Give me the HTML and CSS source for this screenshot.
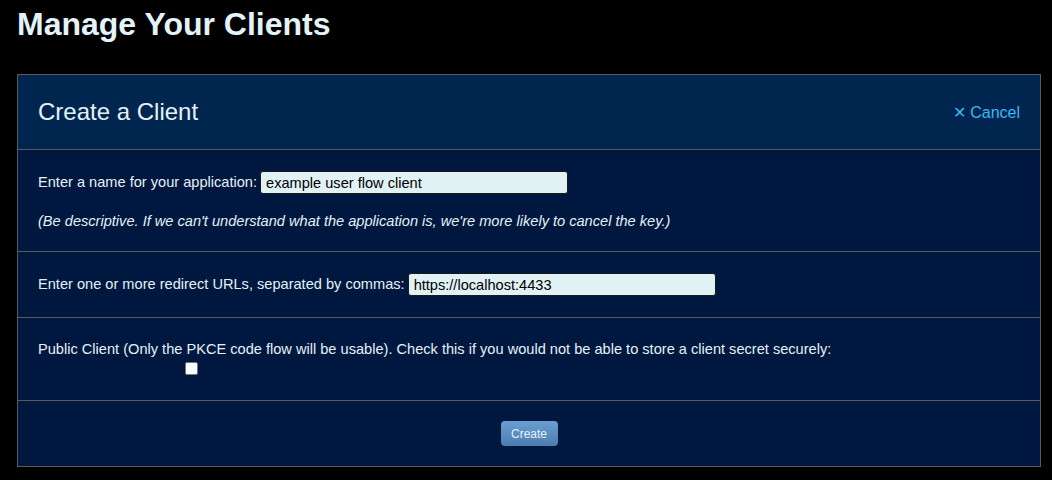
FILE: index.html
```html
<!DOCTYPE html>
<html>
<head>
<meta charset="utf-8">
<link rel="stylesheet" href="styles.css">
</head>
<body>
<h1 class="page-title">Manage Your Clients</h1>
<div class="panel">
  <div class="panel-header">
    <h2 class="panel-title">Create a Client</h2>
    <a class="cancel" href="#">&#x2715; Cancel</a>
  </div>
  <div class="section section-name">
    <div class="row">
      <label class="label">Enter a name for your application:</label>
      <input class="text-input" type="text" value="example user flow client">
    </div>
    <p class="hint">(Be descriptive. If we can't understand what the application is, we're more likely to cancel the key.)</p>
  </div>
  <div class="section section-urls">
    <div class="row">
      <label class="label">Enter one or more redirect URLs, separated by commas:</label>
      <input class="text-input" type="text" value="https://localhost:4433">
    </div>
  </div>
  <div class="section section-public">
    <div class="label">Public Client (Only the PKCE code flow will be usable). Check this if you would not be able to store a client secret securely:</div>
    <div class="check-row"><span class="checkbox"></span></div>
  </div>
  <div class="section section-submit">
    <button class="btn" type="button">Create</button>
  </div>
</div>
</body>
</html>
```
FILE: styles.css
```css
html, body {
  margin: 0;
  padding: 0;
  background: #000;
}
body {
  font-family: "Liberation Sans", Arial, sans-serif;
  color: #e4f2f6;
  padding: 0 11px 0 17px;
}
.page-title {
  margin: 0;
  padding-top: 6px;
  height: 74px;
  box-sizing: border-box;
  font-size: 32px;
  font-weight: bold;
  line-height: 37px;
  color: #e4f3f8;
}
.panel {
  border: 1px solid #5a5a5a;
  background: #00173f;
}
.panel-header {
  background: #00264f;
  height: 74px;
  border-bottom: 1px solid #5a5a5a;
  display: flex;
  align-items: center;
  justify-content: space-between;
  padding: 0 20px 0 20px;
}
.panel-title {
  margin: 0;
  font-weight: normal;
  font-size: 24px;
  color: #e4f2f6;
}
.cancel {
  color: #3db6f2;
  text-decoration: none;
  font-size: 16px;
}
.section {
  border-bottom: 1px solid #5a5a5a;
  padding: 0 20px;
  font-size: 14.6px;
}
.section:last-child {
  border-bottom: none;
}
.row {
  display: flex;
  align-items: center;
}
.label {
  line-height: 17px;
}
.text-input {
  margin-left: 3px;
  width: 308px;
  height: 23px;
  box-sizing: border-box;
  border: 1px solid #1a1a1a;
  border-radius: 3px;
  background: #e1f2f4;
  font-family: "Liberation Sans", Arial, sans-serif;
  font-size: 14.6px;
  padding: 0 5px;
  color: #000;
}
.section-name {
  height: 102px;
  box-sizing: border-box;
  padding-top: 21px;
}
.hint {
  margin: 19px 0 0 0;
  font-style: italic;
  line-height: 17px;
}
.section-urls {
  height: 66px;
  box-sizing: border-box;
  padding-top: 21px;
}
.section-public {
  height: 83px;
  box-sizing: border-box;
  padding-top: 23px;
}
.check-row {
  padding-left: 147px;
  padding-top: 4px;
}
.checkbox {
  display: block;
  width: 11px;
  height: 11px;
  background: #fff;
  border: 1px solid #767676;
  border-radius: 2px;
}
.section-submit {
  height: 65px;
  box-sizing: border-box;
  display: flex;
  justify-content: center;
  padding-top: 20px;
}
.btn {
  width: 57px;
  height: 25px;
  border: none;
  border-radius: 4px;
  background: linear-gradient(#6a9fd2, #4b7caf);
  color: #e4f2f6;
  font-family: "Liberation Sans", Arial, sans-serif;
  font-size: 12px;
  padding: 0;
}
```
